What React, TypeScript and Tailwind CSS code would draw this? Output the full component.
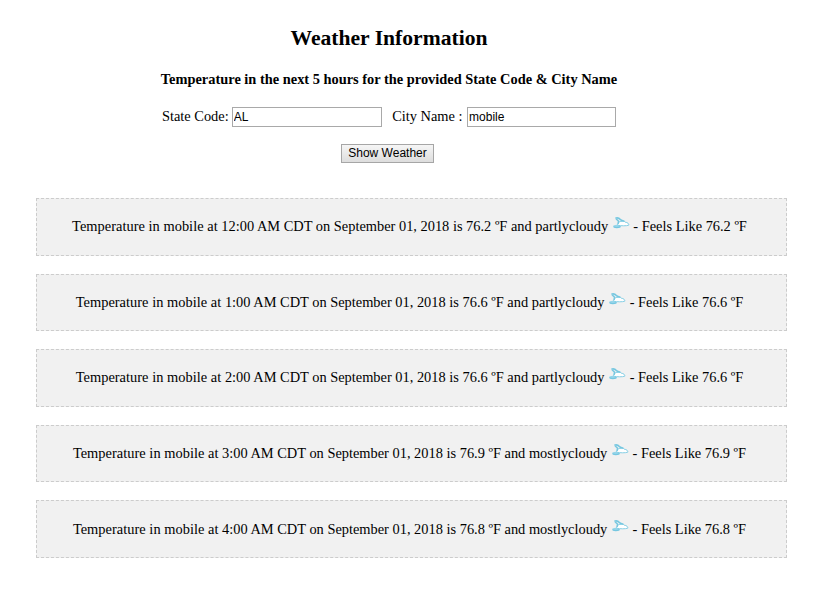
const hours = [
  { time: "12:00 AM", temp: "76.2", condition: "partlycloudy" },
  { time: "1:00 AM", temp: "76.6", condition: "partlycloudy" },
  { time: "2:00 AM", temp: "76.6", condition: "partlycloudy" },
  { time: "3:00 AM", temp: "76.9", condition: "mostlycloudy" },
  { time: "4:00 AM", temp: "76.8", condition: "mostlycloudy" },
];

function CloudIcon() {
  return (
    <svg className="-mt-1 mb-[-2px] inline-block h-[18px] w-[18px] align-baseline" viewBox="0 0 18 18" fill="none">
      <path d="M1 11C2.4 9.6 4.4 10.4 6 9L8.4 10.6L8.6 12.2C5.4 13.8 1.6 13.2 1 11Z" fill="#96d5ea" />
      <path d="M5.6 9.6C6.6 6.8 8.6 6 10 6.4C11.4 5.6 12.8 6.2 13.2 7.2C15.6 7.4 17.2 8.8 16.8 10.2C14.6 11 9 11 5.6 10.2Z" fill="#fff" stroke="#86cfe5" strokeWidth="1" />
      <path d="M3.4 3.4C5.2 2.2 7.4 3.4 9 5L12.4 6.4M4 3.8L6.6 6.2L6 8.8" stroke="#76c7e0" strokeWidth="1.5" />
      <path d="M1.6 11.8C4 13.1 6.4 12.8 8.6 11.4" stroke="#76c7e0" strokeWidth="1.2" />
    </svg>
  );
}

export default function App() {
  return (
    <main className="h-[590px] w-[830px] overflow-hidden bg-white font-['Liberation_Serif','Times_New_Roman',serif] text-[14.4px] leading-[17px] text-black">
      <header className="w-[778px] pt-[26px] text-center">
        <h2 className="text-[21.6px] leading-[25px] font-bold">Weather Information</h2>
        <h4 className="mt-5 font-bold">Temperature in the next 5 hours for the provided State Code &amp; City Name</h4>
        <form onSubmit={(e) => e.preventDefault()}>
          <div className="mt-[19px] flex h-5 items-center justify-center">
            <label className="mr-[3px] pb-0.5" htmlFor="state">State Code:</label>
            <input id="state" defaultValue="AL" className="h-5 w-[150px] border border-[#a9a9a9] bg-white px-px font-['Liberation_Sans',Arial,sans-serif] text-[12px] outline-none" />
            <label className="mr-[4.5px] ml-[10.5px] pb-0.5" htmlFor="city">City Name :</label>
            <input id="city" defaultValue="mobile" className="h-5 w-[149px] border border-[#a9a9a9] bg-white px-px font-['Liberation_Sans',Arial,sans-serif] text-[12px] outline-none" />
          </div>
          <button className="mt-[17px] ml-[341px] block h-[19px] w-[93px] border border-[#a6a6a6] bg-linear-to-b from-[#f6f6f6] to-[#dddddd] pb-px font-['Liberation_Sans',Arial,sans-serif] text-[12px] leading-[16px]">Show Weather</button>
        </form>
      </header>
      <section className="mt-[35px] ml-9 flex w-[751px] flex-col gap-[18px]">
        {hours.map((h) => (
          <p key={h.time} className="h-[57.6px] border border-dashed border-[#ccc] bg-[#f1f1f1] pt-[19.2px] pr-[4px] text-center whitespace-nowrap">
            <span className="tracking-[0.03px]">Temperature in mobile at </span>{h.time} CDT on September 01, 2018 is {h.temp} ºF and {h.condition} <CloudIcon /> - Feels Like {h.temp} ºF
          </p>
        ))}
      </section>
    </main>
  );
}
